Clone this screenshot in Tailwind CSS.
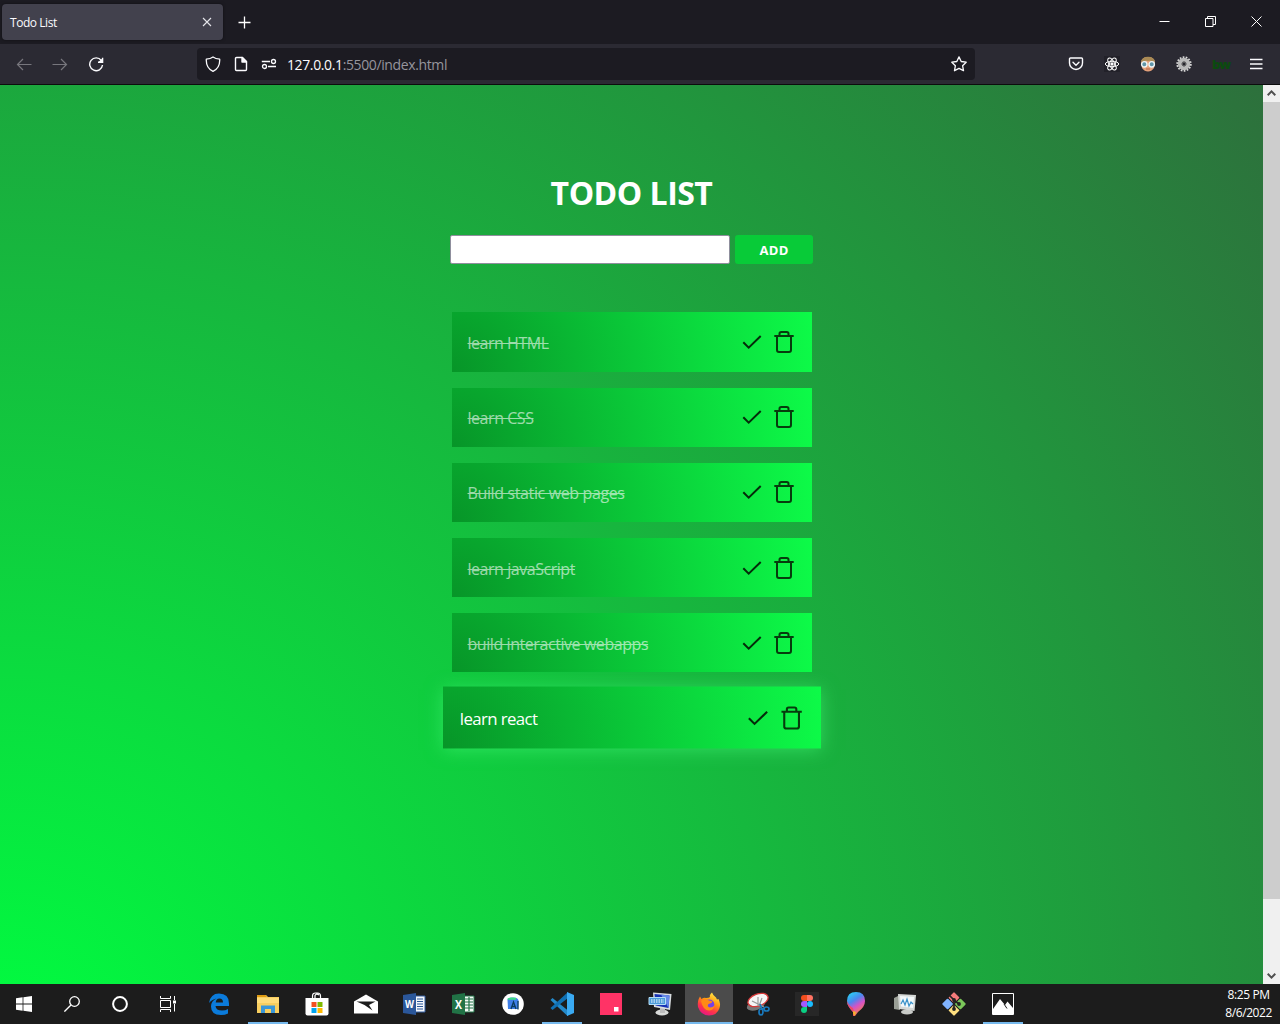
<!DOCTYPE html>
<html lang="en">
<head>
<meta charset="utf-8">
<title>Todo List</title>
<script src="https://cdn.jsdelivr.net/npm/@tailwindcss/browser@4"></script>
</head>
<body class="h-[1024px] w-[1280px] overflow-hidden font-['Open_Sans','Noto_Sans',sans-serif]">
<svg class="hidden">
  <defs>
    <symbol id="check" viewBox="0 0 20 16"><path d="M1.300 8.200 6.700 13.600 18.700 2" fill="none" stroke="#042c0a" stroke-width="2"/></symbol>
    <symbol id="trash" viewBox="0 0 20 24"><path d="M.3 6H19.700M5.500 6V3.700Q5.500 2 7.200 2H12.800Q14.500 2 14.500 3.700V6M3 6V20Q3 22 5 22H15Q17 22 17 20V6" fill="none" stroke="#063c0d" stroke-width="2"/></symbol>
  </defs>
</svg>
<div class="flex h-full flex-col">

  <!-- Tab strip -->
  <header class="flex h-11 shrink-0 items-center bg-[#1c1b22] text-[#fbfbfe]">
    <div class="ml-0.5 flex h-9 w-[221px] items-center justify-between rounded bg-[#42414d] pr-2.5 pl-2 shadow-[0_0_3px_rgba(0,0,0,.5)]">
      <span class="mt-0.5 text-[12px] tracking-[-0.45px]">Todo List</span>
      <svg class="mr-px size-2.5" viewBox="0 0 10 10" fill="none" stroke="#e5e5ea" stroke-width="1.1"><path d="M1 1l8 8M9 1 1 9"/></svg>
    </div>
    <svg class="mt-px ml-[15px] size-[13px]" viewBox="0 0 13 13" fill="none" stroke="#fff" stroke-width="1.3"><path d="M6.500 .5v12M.5 6.500h12"/></svg>
    <div class="mr-px ml-auto flex">
      <div class="grid w-[46px] place-items-center"><svg class="-mt-px h-[11px] w-[11px]" viewBox="0 0 11 11" stroke="#fff"><path d="M.5 5.500h10"/></svg></div>
      <div class="grid w-[46px] place-items-center"><svg class="-mt-px size-[11px]" viewBox="0 0 11 11" fill="none" stroke="#fff"><path d="M.5 2.500h7.500v8H.5zM2.500 2.500V.5h8v8H8"/></svg></div>
      <div class="grid w-[46px] place-items-center"><svg class="-mt-px size-[11px]" viewBox="0 0 11 11" fill="none" stroke="#fff"><path d="M.5 .5l10 10M10.500 .5l-10 10"/></svg></div>
    </div>
  </header>

  <!-- Toolbar -->
  <nav class="flex h-[41px] shrink-0 items-center border-b border-[#0c0c0d] bg-[#2b2a33]">
    <svg class="ml-4 size-4" viewBox="0 0 16 16" fill="none" stroke="#77767d" stroke-width="1.2"><path d="M15.500 8.500H1.500M7 3 1.500 8.500 7 14"/></svg>
    <svg class="ml-5 size-4" viewBox="0 0 16 16" fill="none" stroke="#77767d" stroke-width="1.2"><path d="M.5 8.500h14M9 3l5.500 5.500L9 14"/></svg>
    <svg class="ml-5 size-4" viewBox="0 0 16 16" fill="none" stroke="#fbfbfe" stroke-width="1.4"><path d="M13.300 4.500A6.400 6.400 0 1 0 14.500 9"/><path d="M14.800 2v4.200h-4.600z" fill="#fbfbfe" stroke="none"/><path d="M14.600 1.800v4.400H10"/></svg>
    <div class="ml-[93px] flex h-8 w-[778px] items-center rounded bg-[#1c1b22] px-2">
      <svg class="size-4" viewBox="0 0 16 16" fill="none" stroke="#fbfbfe" stroke-width="1.3" stroke-linejoin="round"><path d="M8 1C6 2.500 4 3 1.300 3.200 1 9 3 13 8 15.300 13 13 15 9 14.700 3.200 12 3 10 2.500 8 1z"/></svg>
      <svg class="ml-3 size-4" viewBox="0 0 16 16" fill="none" stroke="#fbfbfe" stroke-width="1.4" stroke-linejoin="round"><path d="M9.500 1.500H3.500Q2.500 1.500 2.500 2.500v11q0 1 1 1h9q1 0 1-1V5.500z"/><path d="M9 1.500v4.500h4.500z" fill="#fbfbfe"/></svg>
      <svg class="ml-3 size-4" viewBox="0 0 16 16" fill="none" stroke="#fbfbfe" stroke-width="1.3"><path d="M.8 5.500H9M7 10.500h8"/><circle cx="12.500" cy="5.500" r="2"/><circle cx="3.500" cy="10.500" r="2"/></svg>
      <span class="ml-2.5 text-[14px] tracking-[-0.38px] text-[#96959d]"><span class="text-[#fbfbfe]">127.0.0.1</span>:5500/index.html</span>
      <svg class="ml-auto size-4" viewBox="0 0 16 16" fill="none" stroke="#fbfbfe" stroke-width="1.3" stroke-linejoin="round"><path d="M8 .9l2.200 4.600 5 .7-3.600 3.500.9 5L8 12.400l-4.500 2.300.9-5L.8 6.200l5-.7z"/></svg>
    </div>
    <div class="ml-auto flex items-center gap-5 pr-4">
      <svg class="size-4" viewBox="0 0 16 16" fill="none" stroke="#fbfbfe" stroke-width="1.4" stroke-linecap="round" stroke-linejoin="round"><path d="M2.500 2h11q1 0 1 1v4a6.500 6.500 0 0 1-13 0V3q0-1 1-1z"/><path d="M5 6.300l3 3 3-3"/></svg>
      <svg class="size-4" viewBox="0 0 16 16" fill="none" stroke="#fff" stroke-width="1"><path d="M0 0h16v16H0z" fill="#222129" stroke="none"/><ellipse cx="8" cy="8" rx="6.700" ry="2.700"/><ellipse cx="8" cy="8" rx="6.700" ry="2.700" transform="rotate(60 8 8)"/><ellipse cx="8" cy="8" rx="6.700" ry="2.700" transform="rotate(120 8 8)"/><circle cx="8" cy="8" r="1.200" fill="#fff"/></svg>
      <svg class="size-4" viewBox="0 0 16 16"><path d="M1 6.500Q1.500 1 8 1t7 5.500L14 12q-2.500 3.500-6 3.500T2 12z" fill="#e3a07a"/><path d="M1 6.500Q1.500 .8 8 .8t7 5.700Q12 4 8 5 4 4 1 6.500z" fill="#a98a55"/><circle cx="4.300" cy="8.300" r="2.700" fill="#5f95a8" stroke="#edf4f5" stroke-width="1.400"/><circle cx="11.700" cy="8.300" r="2.700" fill="#5f95a8" stroke="#edf4f5" stroke-width="1.400"/><path d="M6 13h4" stroke="#b66247"/></svg>
      <svg class="size-4" viewBox="0 0 16 16" fill="none"><circle cx="8" cy="8" r="6.800" stroke="#dcdcdc" stroke-width="1.800" stroke-dasharray="1.700 1.350"/><circle cx="8" cy="8" r="4.300" stroke="#b9b9b9" stroke-width="3.800"/><circle cx="8" cy="8" r="2" fill="#25242b" stroke="#777"/></svg>
      <span class="grid size-4 place-items-center text-[13px] leading-4 font-extrabold tracking-[-1.2px] text-[#0b4a0f]">bw</span>
      <svg class="size-4" viewBox="0 0 16 16" stroke="#fbfbfe" stroke-width="1.300"><path d="M2 3.500h12.500M2 8h12.500M2 12.500h12.500"/></svg>
    </div>
  </nav>

  <!-- Page viewport -->
  <div class="flex h-[899px] shrink-0">
    <main class="flex h-[899px] w-[1263px] flex-col items-center overflow-hidden bg-[radial-gradient(circle_1597px_at_0px_977px,#00ff40,#2d703c)]">
      <h1 class="mt-[84px] h-12 text-[32px] leading-[48px] font-bold tracking-[-0.5px] text-white">TODO LIST</h1>
      <form class="mt-[18px] flex h-[29px] gap-[5px]">
        <input class="h-[29px] w-[280px] rounded-xs border border-[#8f8f9d] bg-white">
        <button type="button" class="h-[29px] w-[78px] rounded-[3px] bg-[#08cb38] pt-0.5 text-[13px] font-bold tracking-[0.3px] text-white">ADD</button>
      </form>
      <ul class="mt-[48.4px] flex w-[360px] flex-col gap-4 text-[16px] text-white">
        <li class="flex h-[59.2px] items-center bg-[radial-gradient(circle_at_bottom_left,#079528,#0dfb48)] pr-[18px] pl-4"><span class="mt-0.5 tracking-[-0.47px] line-through opacity-60">learn HTML</span><svg class="ml-auto h-4 w-5"><use href="#check"/></svg><svg class="ml-3 h-6 w-5"><use href="#trash"/></svg></li>
        <li class="flex h-[59.2px] items-center bg-[radial-gradient(circle_at_bottom_left,#079528,#0dfb48)] pr-[18px] pl-4"><span class="mt-0.5 tracking-[-0.45px] line-through opacity-60">learn CSS</span><svg class="ml-auto h-4 w-5"><use href="#check"/></svg><svg class="ml-3 h-6 w-5"><use href="#trash"/></svg></li>
        <li class="flex h-[59.2px] items-center bg-[radial-gradient(circle_at_bottom_left,#079528,#0dfb48)] pr-[18px] pl-4"><span class="mt-0.5 tracking-[-0.37px] line-through opacity-60">Build static web pages</span><svg class="ml-auto h-4 w-5"><use href="#check"/></svg><svg class="ml-3 h-6 w-5"><use href="#trash"/></svg></li>
        <li class="flex h-[59.2px] items-center bg-[radial-gradient(circle_at_bottom_left,#079528,#0dfb48)] pr-[18px] pl-4"><span class="mt-0.5 tracking-[-0.46px] line-through opacity-60">learn javaScript</span><svg class="ml-auto h-4 w-5"><use href="#check"/></svg><svg class="ml-3 h-6 w-5"><use href="#trash"/></svg></li>
        <li class="flex h-[59.2px] items-center bg-[radial-gradient(circle_at_bottom_left,#079528,#0dfb48)] pr-[18px] pl-4"><span class="mt-0.5 tracking-[-0.43px] line-through opacity-60">build interactive webapps</span><svg class="ml-auto h-4 w-5"><use href="#check"/></svg><svg class="ml-3 h-6 w-5"><use href="#trash"/></svg></li>
        <li class="flex h-[59.2px] scale-105 items-center bg-[radial-gradient(circle_at_bottom_left,#079528,#0dfb48)] pr-[18px] pl-4 shadow-[0_2px_16px_rgba(70,245,120,.55)]"><span class="mt-0.5 tracking-[-0.57px]">learn react</span><svg class="ml-auto h-4 w-5"><use href="#check"/></svg><svg class="ml-3 h-6 w-5"><use href="#trash"/></svg></li>
      </ul>
    </main>
    <!-- Scrollbar -->
    <div class="flex w-[17px] flex-col bg-[#f0f0f0]">
      <div class="grid h-[17px] place-items-center"><svg class="-mt-0.5 h-[6px] w-[9px]" viewBox="0 0 9 6" fill="none" stroke="#505050" stroke-width="2"><path d="M.7 5.200 4.500 1.400 8.300 5.200"/></svg></div>
      <div class="h-[797px] bg-[#cdcdcd]"></div>
      <div class="mt-auto grid h-[17px] place-items-center"><svg class="h-[6px] w-[9px]" viewBox="0 0 9 6" fill="none" stroke="#505050" stroke-width="2"><path d="M.7 .8 4.500 4.600 8.300 .8"/></svg></div>
    </div>
  </div>

  <!-- Taskbar -->
  <footer class="flex h-10 shrink-0 bg-[#1c1c1c]">
    <div class="grid w-12 place-items-center"><svg class="size-4" viewBox="0 0 16 16" fill="#fff"><path d="M0 2.300l6.600-1v6.300H0zM7.400 1.200 16 0v7.600H7.400zM0 8.400h6.600v6.300L0 13.800zM7.400 8.400H16V16l-8.600-1.200z"/></svg></div>
    <div class="grid w-12 place-items-center"><svg class="size-4" viewBox="0 0 16 16" fill="none" stroke="#fff" stroke-width="1.300"><circle cx="10.500" cy="5.500" r="4.800"/><path d="M7 9 .4 15.600"/></svg></div>
    <div class="grid w-12 place-items-center"><svg class="size-4" viewBox="0 0 16 16" fill="none" stroke="#fff" stroke-width="2"><circle cx="8" cy="8" r="6.900"/></svg></div>
    <div class="grid w-12 place-items-center"><svg class="size-4" viewBox="0 0 16 16" fill="none" stroke="#fff"><path d="M.5 0v2.500h10V0M.5 16v-2.500h10V16M.5 4.500h10v7H.5zM14.500 0v4M14.500 8v7.500"/><path d="M13 4.500h3v3h-3z" fill="#fff" stroke="none"/></svg></div>
    <div class="ml-[3px] flex">
      <div class="grid w-[49px] place-items-center"><svg class="mr-px size-[22px]" viewBox="0 0 22 22"><path d="M1 10Q2.500 .5 11 .5 21 .5 21 10.500V13H7.500q.5 4.500 6.500 4.500 3.500 0 6-1.500v4.500q-3 1.500-7 1.500Q3 22 3 13.500 3 8 8.500 5.500 3.500 6.500 1 10zM7.700 9.500H15q0-4-3.600-4Q8.200 5.500 7.700 9.500z" fill="#0b7bdb"/></svg></div>
      <div class="relative grid w-[49px] place-items-center"><svg class="mr-0.5 h-[18px] w-[22px]" viewBox="0 0 22 18"><path d="M0 0h9l2 2h11v16H0z" fill="#f8ce5f"/><path d="M0 0h8.500l1.500 2H0z" fill="#de9a11"/><path d="M0 3h22v5H0z" fill="#ffdb79"/><path d="M4 10.500h14V18h-4v-4H8v4H4z" fill="#3a97d8"/></svg><i class="absolute bottom-0 left-1 h-0.5 w-10 bg-[#76b9ed]"></i></div>
      <div class="grid w-[49px] place-items-center"><svg class="mb-px mr-0.5 size-6" viewBox="0 0 24 24"><path d="M7.500 7V4q0-3 3-3h2q3 0 3 3v3M10 6.500V3.500Q11.500 1 14 3" fill="none" stroke="#fff" stroke-width="1.200"/><path d="M.5 6h23v15.500q0 2-2 2h-19q-2 0-2-2z" fill="#fff"/><path d="M6.500 10h5v5h-5z" fill="#f25022"/><path d="M12.500 10h5v5h-5z" fill="#7fba00"/><path d="M6.500 16h5v5h-5z" fill="#00a4ef"/><path d="M12.500 16h5v5h-5z" fill="#ffb900"/></svg></div>
      <div class="grid w-[49px] place-items-center"><svg class="mr-px h-5 w-6" viewBox="0 0 24 20"><path d="M0 7.500 12 .5l12 7V19.500H0z" fill="#fff"/><path d="M2.500 7.500h19L15 11l3.500 5.500L10.500 11z" fill="#1c1c1c"/></svg></div>
      <div class="grid w-[49px] place-items-center"><svg class="mr-1 h-[22px] w-6" viewBox="0 0 24 22"><path d="M13 3h10v16H13z" fill="#f4f7fc" stroke="#335c9f"/><path d="M15 6h6M15 8.500h6M15 11h6M15 13.500h6M15 16h6" stroke="#2b5797" stroke-width="1.200"/><path d="M1 2 14 0v22L1 20z" fill="#2b579a"/><text x="7.500" y="15" text-anchor="middle" font-size="10.500" font-weight="700" fill="#fff" textLength="9" lengthAdjust="spacingAndGlyphs">W</text></svg></div>
      <div class="grid w-[49px] place-items-center"><svg class="mr-1 h-[22px] w-6" viewBox="0 0 24 22"><path d="M13 3h10v16H13z" fill="#f5fbf7" stroke="#217346"/><path d="M14 6h8M14 9h8M14 12h8M14 15h8M18 4v14" stroke="#217346" stroke-width="1.200"/><path d="M1 2 14 0v22L1 20z" fill="#217346"/><text x="7.500" y="15.500" text-anchor="middle" font-size="12.500" font-weight="700" fill="#fff" textLength="7" lengthAdjust="spacingAndGlyphs">X</text></svg></div>
      <div class="grid w-[49px] place-items-center"><svg class="mr-0.5 size-[22px]" viewBox="0 0 22 22"><circle cx="11" cy="11" r="10.800" fill="#fff"/><path d="M5.500 6.500q0-2 5.500-2 5 0 5.500 3l-.5 8.500H6z" fill="#3f7fe8"/><path d="M5.500 5.500l3.500-1 5 .3v2H6z" fill="#3ddc84"/><path d="M9 16l2.500-7 2.500 7M10 13.500h3.500M16 8v8.500" fill="none" stroke="#0b3c5c" stroke-width="1.300"/></svg></div>
      <div class="relative grid w-[49px] place-items-center"><svg class="mr-px size-6" viewBox="0 0 24 24"><path d="M.5 8 2.500 6 18 18.500V24L17 23.500z" fill="#2489ca"/><path d="M.5 16l2 2L18 6V0z" fill="#1070b3"/><path d="M17 0l7 3v18l-7 3z" fill="#3aaaf2"/></svg><i class="absolute bottom-0 left-1 h-0.5 w-10 bg-[#76b9ed]"></i></div>
      <div class="grid w-[49px] place-items-center"><svg class="mr-0.5 size-[22px]" viewBox="0 0 22 22"><path d="M0 0h22v22H0z" fill="#ff3366"/><path d="M14 14h4.500v4.500H14z" fill="#fff"/></svg></div>
      <div class="grid w-[49px] place-items-center"><svg class="mr-0.5 mb-px h-6 w-6" viewBox="0 0 24 24"><ellipse cx="14" cy="20.500" rx="6.500" ry="3" fill="#d8dad8"/><path d="M12 16h5v5h-5z" fill="#bbb"/><path d="M5 .5 23.500 2 22 18 6 15z" fill="#d9dde0"/><path d="M6.500 2 21.500 3.500 20.500 16 7.500 13.500z" fill="#1632b5"/><path d="M13 2.500 21.500 3.500 20.500 16z" fill="#6689e8"/><path d="M1 5.500h16.500v7H1z" fill="#4a9ad9" stroke="#b4ddf5"/><path d="M3 8h13M3 10h13" stroke="#fff" stroke-dasharray="1.500 1"/></svg></div>
      <div class="relative grid w-[49px] place-items-center"><div class="absolute inset-y-0 left-0 w-12 border-b-2 border-[#76b9ed] bg-[#4b4b4b]"></div><svg class="relative mr-px size-6" viewBox="0 0 24 24"><defs><linearGradient id="fx" x1=".8" y1="0" x2=".3" y2="1"><stop offset="0" stop-color="#fff44f"/><stop offset=".4" stop-color="#ff980e"/><stop offset=".7" stop-color="#ff3647"/><stop offset="1" stop-color="#e31587"/></linearGradient></defs><path d="M15 .5q1 3 4 5l1 2 1.500-.5Q24 12 22.500 16 20 23.500 12 23.500T1 15Q0 9 3 4.500L4.500 7Q7 5 9 6 12 6 13 5 12 3 15 .5z" fill="url(#fx)"/><circle cx="12.300" cy="12.500" r="5" fill="#7542e5"/><path d="M4 9q3-3 6-1.500l2 1q4 0 3 2-2 1-3.500 1.500-2 2.500 1.500 3.500 3 0 4.500-2-1 5-5.500 5-6 0-8-9.500z" fill="#ff8a16"/></svg></div>
      <div class="grid w-[49px] place-items-center"><svg class="mr-0.5 size-6" viewBox="0 0 24 24"><ellipse cx="10" cy="13" rx="9.500" ry="5" fill="#777" transform="rotate(-20 10 13)"/><ellipse cx="12" cy="8" rx="10.500" ry="6" fill="#f5f5f5" stroke="#d63838" stroke-width="1.300" transform="rotate(-20 12 8)"/><path d="M12 5v9M6 9l12 6M16 6l-3 8" stroke="#999" stroke-width="1.200"/><g fill="none" stroke="#1979bd" stroke-width="1.700"><ellipse cx="15" cy="20" rx="2" ry="3"/><ellipse cx="20.500" cy="17" rx="2.500" ry="2"/><path d="M14 12l2 5 3-1"/></g></svg></div>
      <div class="grid w-[49px] place-items-center"><svg class="mr-px size-6" viewBox="0 0 24 24"><path d="M0 0h24v24H0z" fill="#272727"/><path d="M12 3H9a3 3 0 0 0 0 6h3z" fill="#f24e1e"/><path d="M12 3h3a3 3 0 0 1 0 6h-3z" fill="#ff7262"/><path d="M12 9H9a3 3 0 0 0 0 6h3z" fill="#a259ff"/><circle cx="15" cy="12" r="3" fill="#1abcfe"/><path d="M12 15H9a3 3 0 1 0 3 3z" fill="#0acf83"/></svg></div>
      <div class="grid w-[49px] place-items-center"><svg class="mr-0.5 size-6" viewBox="0 0 24 24"><defs><linearGradient id="pd" x1=".2" y1="0" x2=".7" y2="1"><stop offset="0" stop-color="#28d2f5"/><stop offset=".35" stop-color="#4b87ee"/><stop offset=".6" stop-color="#d552c7"/><stop offset="1" stop-color="#ff8a2b"/></linearGradient></defs><path d="M12 0q9 0 9 9 0 6-7 11l-3 4q-2 0-2-4Q3 14 3 9q0-9 9-9z" fill="url(#pd)"/><path d="M3 9q0 5 6 11V24h2q-1-5-2-8-4-2-6-7z" fill="#ef4a68"/><path d="M9 19l3 1-1.500 4Q9 23 9 19z" fill="#f6b429"/></svg></div>
      <div class="grid w-[49px] place-items-center"><svg class="mr-px size-6" viewBox="0 0 24 24"><path d="M1 6l6-3v15l-6-1z" fill="#9a9f96"/><ellipse cx="14" cy="20" rx="6" ry="2.500" fill="#c9cbc8"/><path d="M5 2 23 3 21.500 19 6 17z" fill="#d5d8d6"/><path d="M7 4 21 5 20 16 8 14.500z" fill="#f3f8fa"/><path d="M8 12l2-4 2 5 2-6 2 7 2-4 2 2" fill="none" stroke="#3b92ca" stroke-width="1.200"/></svg></div>
      <div class="grid w-[49px] place-items-center"><svg class="mr-px size-6" viewBox="0 0 24 24"><rect x="8" y="1.600" width="8" height="8" rx="1" fill="#f47b7b" transform="rotate(45 12 5.600)"/><rect x="1.600" y="8" width="8" height="8" rx="1" fill="#80b3ff" transform="rotate(45 5.600 12)"/><rect x="14.400" y="8" width="8" height="8" rx="1" fill="#7bc75a" transform="rotate(45 18.400 12)"/><rect x="8" y="14.400" width="8" height="8" rx="1" fill="#ffe080" transform="rotate(45 12 18.400)"/><path d="M7.500 3.500 12 8v9M12 8l5 4" fill="none" stroke="#222" stroke-width="1.700"/><circle cx="12" cy="8" r="1.900" fill="#222"/><circle cx="17" cy="12" r="1.900" fill="#222"/><circle cx="12" cy="17" r="1.900" fill="#222"/></svg></div>
      <div class="relative grid w-[49px] place-items-center"><svg class="mr-px size-[22px]" viewBox="0 0 22 22"><path d="M.5 .5h21v21H.5z" fill="#1c1c1c" stroke="#fff"/><path d="M1 16 8 6l5 6 2.500-3.500L21 15v6.500H1z" fill="#fff"/><path d="M12 11l3 4.500" stroke="#1c1c1c"/></svg><i class="absolute bottom-0 left-1 h-0.5 w-10 bg-[#76b9ed]"></i></div>
    </div>
    <div class="mr-2 ml-auto pt-0.5 text-center text-[12px] leading-[18px] tracking-[-0.4px] text-white"><div>8:25 PM</div><div>8/6/2022</div></div>
  </footer>
</div>
</body>
</html>
